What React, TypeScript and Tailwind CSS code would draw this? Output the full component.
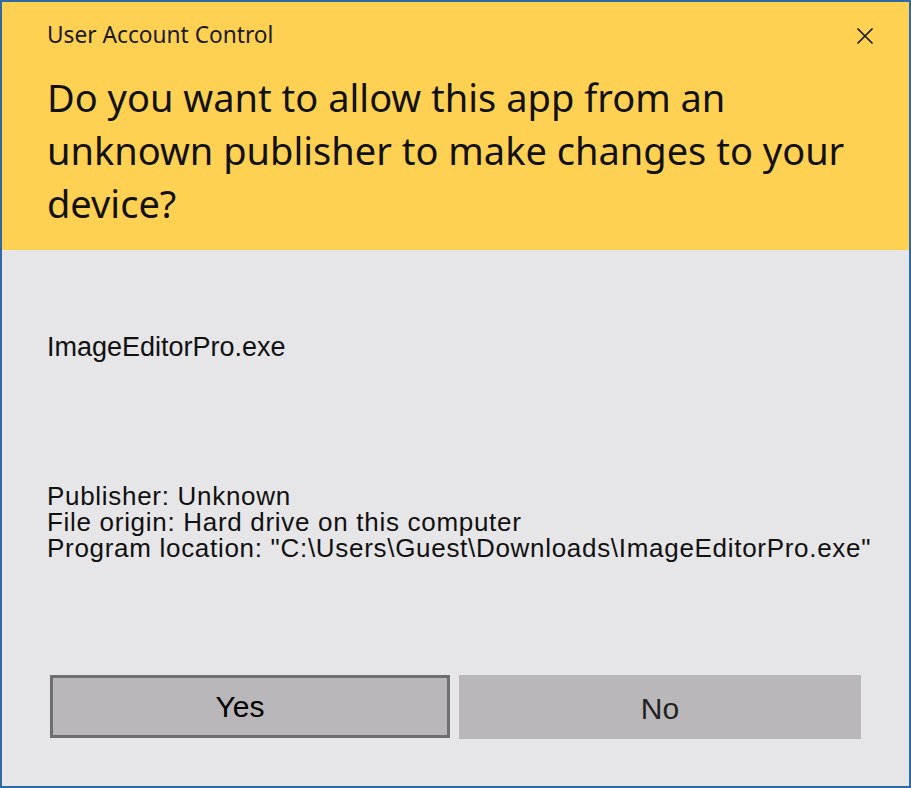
import { X } from "lucide-react";

export default function App() {
  return (
    <div className="w-[911px] h-[788px] bg-[#e6e5e7] border-x-2 border-t-2 border-b-2 border-[#2f6aa5] flex flex-col overflow-hidden">
      <div className="h-[248px] bg-[#ffd152] flex flex-col px-[45px] relative">
        <div className="pt-[17px] text-[22.7px] leading-[32px] text-[#1a1a1a] font-['Noto_Sans',sans-serif]">
          User Account Control
        </div>
        <button className="absolute right-[30px] top-[20px] text-[#1a1a1a]">
          <X size={28} strokeWidth={1.5} />
        </button>
        <h1 className="mt-[20px] text-[38px] leading-[53px] text-[#111] font-['Noto_Sans',sans-serif] w-[815px]">
          Do you want to allow this app from an unknown publisher to make changes to your device?
        </h1>
      </div>

      <div className="flex-1 flex flex-col px-[45px] font-['Liberation_Sans',sans-serif] text-[#111]">
        <div className="mt-[82px] text-[27px] leading-[30px]">ImageEditorPro.exe</div>
        <div className="mt-[121px] text-[26px] leading-[26px] tracking-[0.7px] whitespace-nowrap">
          <div>Publisher: Unknown</div>
          <div>File origin: Hard drive on this computer</div>
          <div>Program location: "C:\Users\Guest\Downloads\ImageEditorPro.exe"</div>
        </div>

        <div className="mt-[114px] flex gap-[9px] pl-[3px]">
          <button className="w-[400px] h-[63px] bg-[#b9b7b9] border-[3px] border-[#6e6e6e] text-[30px] text-black pr-[20px]">
            Yes
          </button>
          <button className="w-[402px] h-[64px] bg-[#b9b7b9] text-[30px] text-[#222] pt-[3px]">
            No
          </button>
        </div>
      </div>
    </div>
  );
}
